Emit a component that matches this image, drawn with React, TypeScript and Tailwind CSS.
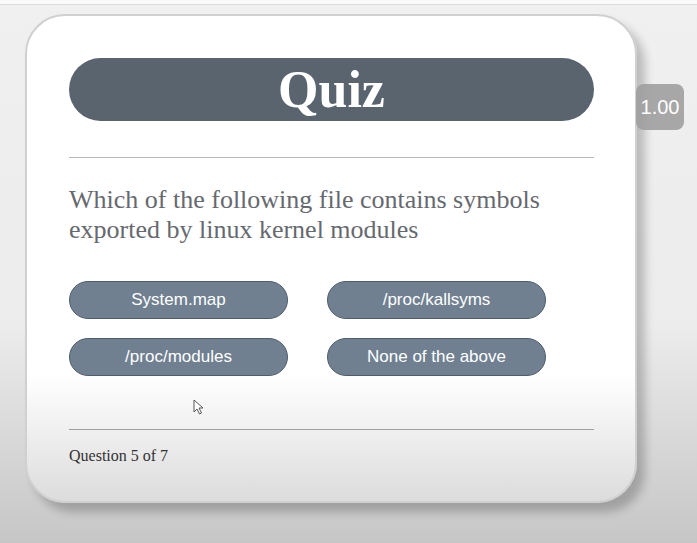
import React from 'react';

const options = ['System.map', '/proc/kallsyms', '/proc/modules', 'None of the above'];

const App: React.FC = () => {
  return (
    <div className="relative w-[697px] h-[543px] overflow-hidden bg-[linear-gradient(to_bottom,#f0f0f0_0%,#ececec_60%,#c6c6c6_100%)]">
      <div className="h-[5px] bg-[#fafafa] border-b border-[#dcdcdc]" />

      <div className="ml-[25px] mt-[9px] w-[612px] h-[489px] rounded-[40px] border-2 border-[#d0d0d0] shadow-[8px_9px_10px_rgba(0,0,0,0.22)] bg-[linear-gradient(to_bottom,#ffffff_0%,#ffffff_74%,#dcdcdc_100%)] px-[42px] pt-[42px]">
        <div className="h-[63px] w-[525px] rounded-full bg-[#59646f] flex items-center justify-center">
          <span className="text-white text-[52px] font-bold leading-none font-['Liberation_Serif',serif]">Quiz</span>
        </div>

        <div className="mt-[36px] w-[525px] h-px bg-[#b8b8b8]" />

        <p className="mt-[27px] text-[26px] leading-[30px] text-[#66696f] font-['Liberation_Serif',serif]">
          Which of the following file contains symbols
          <br />
          exported by linux kernel modules
        </p>

        <div className="mt-[36px] grid grid-cols-[219px_219px] gap-x-[39px] gap-y-[19px]">
          {options.map(opt => (
            <button
              key={opt}
              className="h-[38px] rounded-full bg-[#708090] border border-[#4e5c6c] text-white text-[17px] font-['Liberation_Sans',sans-serif]"
            >
              {opt}
            </button>
          ))}
        </div>

        <div className="mt-[53px] w-[525px] h-px bg-[#a0a0a0]" />

        <div className="mt-[17px] text-[16px] leading-[18px] text-[#333333] font-['Liberation_Serif',serif]">Question 5 of 7</div>
      </div>

      <div className="absolute left-[636px] top-[84px] w-[48px] h-[46px] rounded-[8px] bg-[#9e9e9e]/90 flex items-center justify-center">
        <span className="text-white text-[20px] font-['Liberation_Sans',sans-serif]">1.00</span>
      </div>

      <svg className="absolute left-[193px] top-[399px]" width="12" height="16" viewBox="0 0 12 16">
        <path d="M1 1 L1 13 L4 10 L6.5 15 L8.5 14 L6 9 L10 9 Z" fill="#fff" stroke="#555" strokeWidth="1" strokeLinejoin="round" />
      </svg>
    </div>
  );
};

export default App;
